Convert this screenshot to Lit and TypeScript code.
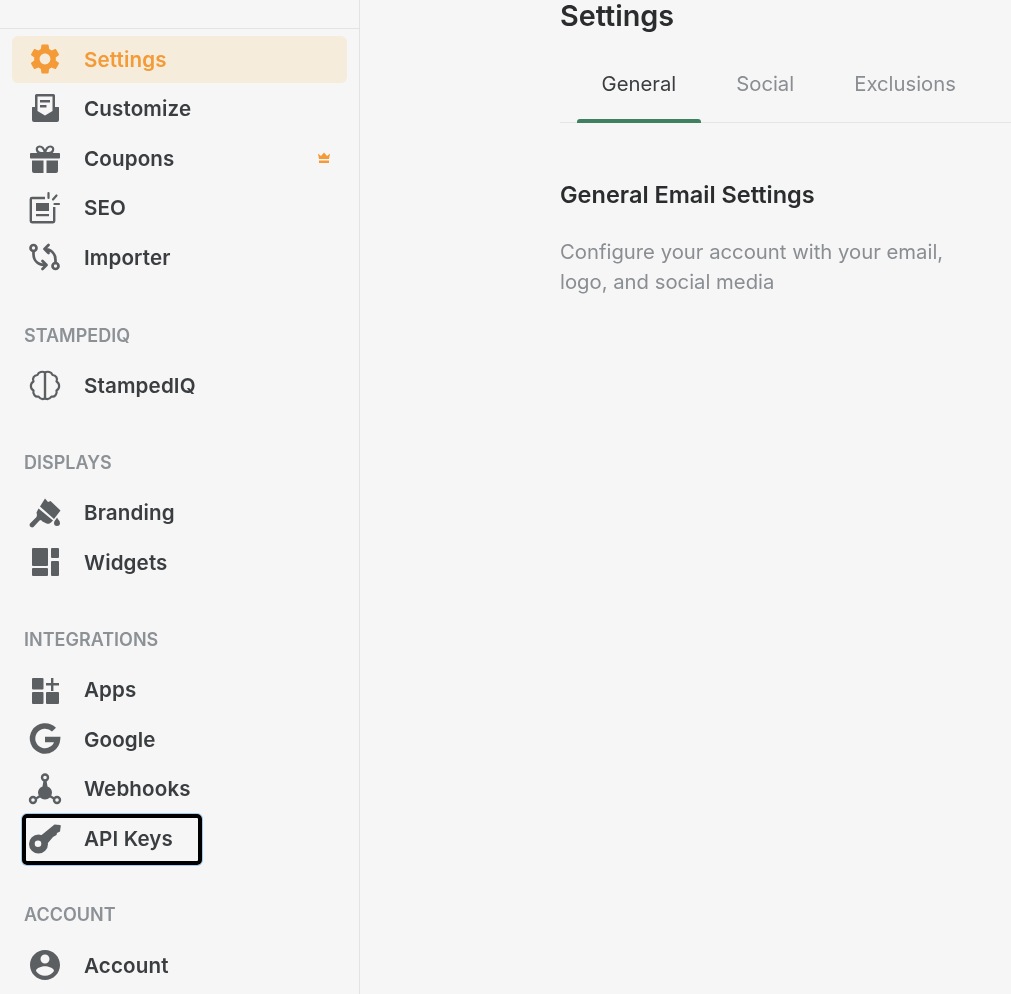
import { LitElement, html, css, svg } from "lit";
import { customElement } from "lit/decorators.js";

const icons: Record<string, unknown> = {
  settings: svg`<g transform="scale(1.5)"><path fill-rule="evenodd" d="M19.14 12.94c.04-.3.06-.61.06-.94 0-.32-.02-.64-.07-.94l2.03-1.58c.18-.14.23-.41.12-.61l-1.92-3.32c-.12-.22-.37-.29-.59-.22l-2.39.96c-.5-.38-1.03-.7-1.62-.94l-.36-2.54c-.04-.24-.24-.41-.48-.41h-3.84c-.24 0-.43.17-.47.41l-.36 2.54c-.59.24-1.13.57-1.62.94l-2.39-.96c-.22-.08-.47 0-.59.22L2.74 8.87c-.12.21-.08.47.12.61l2.03 1.58c-.05.3-.09.63-.09.94s.02.64.07.94l-2.03 1.58c-.18.14-.23.41-.12.61l1.92 3.32c.12.22.37.29.59.22l2.39-.96c.5.38 1.03.7 1.62.94l.36 2.54c.05.24.24.41.48.41h3.84c.24 0 .44-.17.47-.41l.36-2.54c.59-.24 1.13-.56 1.62-.94l2.39.96c.22.08.47 0 .59-.22l1.92-3.32c.12-.22.07-.47-.12-.61l-2.01-1.58zM12 15.6c-1.98 0-3.6-1.62-3.6-3.6s1.62-3.6 3.6-3.6 3.6 1.62 3.6 3.6-1.62 3.6-3.6 3.6z"/></g>`,
  customize: svg`<path fill-rule="evenodd" d="M9.500 3h17a1.500 1.500 0 0 1 1.500 1.500V16h3.500a.5.5 0 0 1 .5.5V29a2 2 0 0 1-2 2H7a2 2 0 0 1-2-2V16.500a.5.5 0 0 1 .5-.5H8V4.500A1.500 1.500 0 0 1 9.500 3zM10.500 5.500V20l7.500 4.500 7.500-4.500V5.500z"/><path d="M13 9h10v2.400H13zM13 14h6.500v2.400H13z"/>`,
  coupons: svg`<rect x="3" y="13" width="30" height="5.500" rx=".8"/><path d="M5 20.500h11.500V33H7a2 2 0 0 1-2-2zM19.500 20.500H31V31a2 2 0 0 1-2 2h-9.500z"/><path fill="none" stroke="currentColor" stroke-width="2.200" d="M18 13c-.8-3.800-3-6.500-5.500-6.500-2 0-3 1.800-2.600 3.500.4 1.800 1.800 3 4.100 3zM18 13c.8-3.800 3-6.500 5.500-6.500 2 0 3 1.800 2.600 3.500-.4 1.800-1.800 3-4.100 3z"/>`,
  seo: svg`<path fill="none" stroke="currentColor" stroke-width="2.400" d="M18 8H5a1.200 1.200 0 0 0-1.200 1.200V31a1.200 1.200 0 0 0 1.200 1.200h21a1.200 1.200 0 0 0 1.200-1.200V17"/><path d="M9 13h13v8H9zM9 24h13v2.200H9z"/><path fill="none" stroke="currentColor" stroke-width="2.200" stroke-linecap="round" d="M21.500 3v5M26 9.500l3.500-4M27.500 14H32"/>`,
  importer: svg`<g fill="none" stroke="currentColor" stroke-width="2.700" stroke-linecap="round" stroke-linejoin="round"><circle cx="6.500" cy="9" r="3"/><circle cx="28.500" cy="27" r="3"/><path d="M6.500 12v3c0 7 5 11 12.500 11M15.500 22l4 4-4 4"/><path d="M28.500 24v-3c0-7-5-11-11-11M21.500 6l-4 4 4 4"/></g>`,
  brain: svg`<g fill="none" stroke="currentColor" stroke-width="2.200" stroke-linejoin="round"><path d="M18 4.500C15.500 3 11.500 3.800 10.500 7 7 7 5 10.500 6.500 13.500 3 15.500 3 20.500 6.500 22.500 5.500 26 8.500 29.500 11.500 28.500 13.500 31.500 16 31.500 18 30.500z"/><path d="M18 4.500C20.500 3 24.500 3.800 25.500 7 29 7 31 10.500 29.500 13.500 33 15.500 33 20.500 29.500 22.500 30.500 26 27.500 29.500 24.500 28.500 22.500 31.500 20 31.500 18 30.500z"/></g>`,
  brush: svg`<path d="M18 3.500l3 3.500 2.500-1 10 9.500-6.500 8.500L13 11.500z"/><path d="M11.500 13.500L26 25.500l-2 2c-1.500 1.500-3 1.500-4.500 1l-4-2-1.500-1.500-1.500.5-6 6.500c-2 1.500-5-1-3.500-3.500l6.500-6.500.5-2-.5-2.500z"/><path d="M30 22.500c1 2 3 3.500 3 5.500a3 3 0 0 1-6 0c0-2 2-3.500 3-5.500z"/>`,
  widgets: svg`<rect x="5" y="4" width="16" height="18" rx="1"/><rect x="24" y="4" width="8" height="10" rx="1"/><rect x="24" y="17" width="8" height="15" rx="1"/><rect x="5" y="24" width="16" height="8" rx="1"/>`,
  apps: svg`<rect x="5" y="6" width="11.500" height="11.500" rx="1"/><rect x="5" y="20" width="11.500" height="12" rx="1"/><rect x="19" y="20" width="13" height="12" rx="1"/><path d="M24 6h2.400v5H32v2.400h-5.600V19H24v-5.600h-5V11h5z"/>`,
  google: svg`<path fill="none" stroke="currentColor" stroke-width="5.500" d="M27 8.700A12.500 12.500 0 1 0 30.500 18.500H18"/>`,
  webhooks: svg`<g fill="none" stroke="currentColor" stroke-width="2.400"><circle cx="18" cy="6.500" r="3"/><circle cx="6" cy="29" r="3"/><circle cx="30" cy="29" r="3"/><path d="M9 27.500l6-3.500M27 27.500l-6-3.500"/></g><path d="M16.500 9.500h3l1 6c3 1 4.500 3.500 4.500 6a7 7 0 0 1-14 0c0-2.500 1.500-5 4.500-6z"/>`,
  key: svg`<path fill-rule="evenodd" d="M11.500 14.500a9.500 9.500 0 1 1 0 19 9.500 9.500 0 0 1 0-19zM11 20.500a3.300 3.300 0 1 0 0 6.600 3.300 3.300 0 0 0 0-6.600z"/><path d="M14 15.500L27.500 4.500l5.500 0.500a1 1 0 0 1 .8 .8L33 11.500 30 13l-.5 2-3.500 2-5.500 6.500z"/>`,
  account: svg`<g transform="scale(1.5)"><path fill-rule="evenodd" d="M12 2C6.480 2 2 6.480 2 12s4.480 10 10 10 10-4.480 10-10S17.520 2 12 2zm0 3c1.660 0 3 1.340 3 3s-1.340 3-3 3-3-1.340-3-3 1.340-3 3-3zm0 14.200c-2.500 0-4.710-1.280-6-3.220.03-1.990 4-3.080 6-3.080 1.990 0 5.970 1.090 6 3.080-1.290 1.940-3.500 3.220-6 3.220z"/></g>`,
};

interface Item { label: string; icon: string; active?: boolean; crown?: boolean; marked?: boolean; }
interface Group { title?: string; items: Item[]; }

const groups: Group[] = [
  { items: [
    { label: "Settings", icon: "settings", active: true },
    { label: "Customize", icon: "customize" },
    { label: "Coupons", icon: "coupons", crown: true },
    { label: "SEO", icon: "seo" },
    { label: "Importer", icon: "importer" },
  ] },
  { title: "STAMPEDIQ", items: [{ label: "StampedIQ", icon: "brain" }] },
  { title: "DISPLAYS", items: [
    { label: "Branding", icon: "brush" },
    { label: "Widgets", icon: "widgets" },
  ] },
  { title: "INTEGRATIONS", items: [
    { label: "Apps", icon: "apps" },
    { label: "Google", icon: "google" },
    { label: "Webhooks", icon: "webhooks" },
    { label: "API Keys", icon: "key", marked: true },
  ] },
  { title: "ACCOUNT", items: [{ label: "Account", icon: "account" }] },
];

@customElement("app-root")
export class AppRoot extends LitElement {
  static styles = css`
    :host {
      display: flex;
      height: 994px;
      overflow: hidden;
      background: #f6f6f6;
      font-family: Inter, "Noto Sans", sans-serif;
      color: #202223;
      filter: blur(0.45px);
    }
    .sidebar {
      width: 360px;
      flex: none;
      box-sizing: border-box;
      border-right: 1.500px solid #e1e3e5;
      padding-top: 28px;
    }
    .nav {
      border-top: 1.500px solid #e1e3e5;
      padding: 6.500px 12px 0;
      display: flex;
      flex-direction: column;
      gap: 43.700px;
    }
    .group { display: flex; flex-direction: column; gap: 2px; }
    .group:first-child { margin-bottom: 1.200px; }
    .group-title {
      font-size: 18px;
      line-height: 20px;
      font-weight: 600;
      color: #8c9196;
      padding-left: 12px;
      margin-bottom: 14px;
    }
    .item {
      position: relative;
      height: 47.500px;
      display: flex;
      align-items: center;
      gap: 21px;
      padding: 0 17px 0 15px;
      border-radius: 6px;
      font-size: 20.600px;
      font-weight: 600;
      letter-spacing: 0.12px;
      color: #3b3e41;
    }
    .item svg.icon { width: 36px; height: 36px; flex: none; fill: currentColor; color: #5c5f62; }
    .item.active { background: #f5ecdb; color: #f49a36; }
    .item.active svg.icon { color: #f49a36; }
    .crown { margin-left: auto; width: 12px; height: 12px; fill: #f49a36; flex: none; }
    .item.marked::after {
      content: "";
      position: absolute;
      left: 10px;
      top: 0;
      width: 180px;
      height: 51px;
      box-sizing: border-box;
      border: 4px solid #000;
      border-radius: 5px;
      box-shadow: 0 0 0 1px rgba(90, 170, 240, 0.55);
    }
    .main { flex: 1; min-width: 0; padding-left: 200px; }
    h1 {
      margin: 0;
      font-size: 28.800px;
      line-height: 32px;
      font-weight: 600;
      color: #2a2c2e;
    }
    .tabs {
      margin-top: 40px;
      display: flex;
      gap: 11px;
      padding-left: 17px;
      border-bottom: 1.500px solid #e4e5e7;
    }
    .tab {
      position: relative;
      padding: 0 24.500px 26px;
      font-size: 20.300px;
      line-height: 24px;
      color: #8a8e93;
    }
    .tab.active { color: #3b3e41; }
    .tab.active::after {
      content: "";
      position: absolute;
      left: 0;
      right: 0;
      bottom: -1px;
      height: 4.500px;
      border-radius: 3px 3px 0 0;
      background: #3e8060;
    }
    h2 {
      margin: 57px 0 0;
      font-size: 23.500px;
      line-height: 30px;
      font-weight: 600;
      color: #2a2c2e;
    }
    p {
      margin: 27px 0 0;
      max-width: 420px;
      font-size: 20.300px;
      line-height: 30px;
      color: #8a8e93;
    }
  `;

  private renderItem(i: Item) {
    return html`<div class="item ${i.active ? "active" : ""} ${i.marked ? "marked" : ""}">
      <svg class="icon" viewBox="0 0 36 36">${icons[i.icon]}</svg>
      <span>${i.label}</span>
      ${i.crown
        ? html`<svg class="crown" viewBox="0 0 12 12"><path d="M0 1.500l3 2.500L6 0.500 9 4l3-2.500-1 5.500H1zM1 8.500h10V11H1z"/></svg>`
        : ""}
    </div>`;
  }

  render() {
    return html`
      <aside class="sidebar">
        <nav class="nav">
          ${groups.map(
            (g) => html`<section class="group">
              ${g.title ? html`<div class="group-title">${g.title}</div>` : ""}
              ${g.items.map((i) => this.renderItem(i))}
            </section>`
          )}
        </nav>
      </aside>
      <main class="main">
        <h1>Settings</h1>
        <div class="tabs">
          <div class="tab active">General</div>
          <div class="tab">Social</div>
          <div class="tab">Exclusions</div>
        </div>
        <h2>General Email Settings</h2>
        <p>Configure your account with your email, logo, and social media</p>
      </main>
    `;
  }
}
